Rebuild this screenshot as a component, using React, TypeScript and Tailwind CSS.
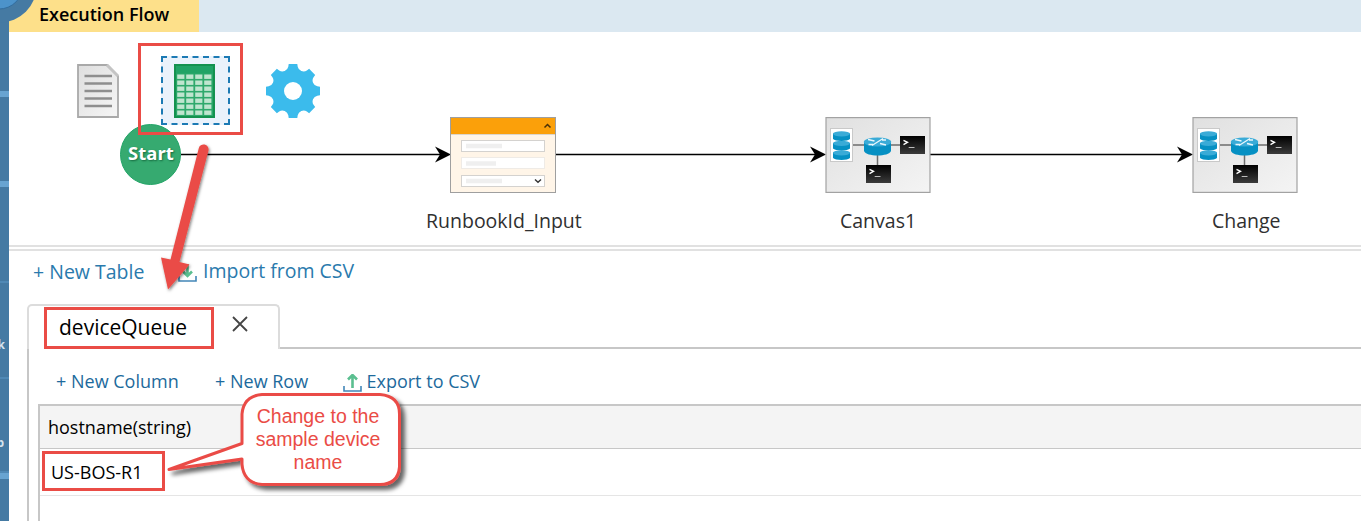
import React from 'react';

const point = (r: number, deg: number) => {
  const a = (deg * Math.PI) / 180;
  return `${(27 + r * Math.cos(a)).toFixed(2)} ${(27 + r * Math.sin(a)).toFixed(2)}`;
};

const gearPath =
  [0, 45, 90, 135, 180, 225, 270, 315]
    .map((a, i) => `${i ? 'L' : 'M'}${point(27.4, a - 9)}L${point(27.4, a + 9)}L${point(24.8, a + 11)}A6 6 0 0 0 ${point(24.8, a + 34)}`)
    .join('') + 'Z';

function Gear() {
  return (
    <svg width="54" height="54" viewBox="0 0 54 54">
      <path d={gearPath} fill="#3bbbec" />
      <circle cx="27" cy="27" r="9" fill="#fff" />
    </svg>
  );
}

function DocIcon() {
  return (
    <svg width="42" height="54" viewBox="0 0 42 54">
      <defs>
        <linearGradient id="paper" x1="0" y1="0" x2="1" y2="1">
          <stop offset="0" stopColor="#dedede" />
          <stop offset="1" stopColor="#f6f6f6" />
        </linearGradient>
      </defs>
      <path d="M1 1H30L41 12V53H1Z" fill="url(#paper)" stroke="#a9a9a9" strokeWidth="1.8" />
      <path d="M30 1L41 12" stroke="#c4c4c4" strokeWidth="3" />
      <path d="M7.5 12H35M7.5 19.5H35M7.5 27H35M7.5 34.5H35M7.5 42H35" stroke="#8e8e8e" strokeWidth="2.7" />
    </svg>
  );
}

function SheetIcon() {
  return (
    <svg width="41" height="54" viewBox="0 0 41 54">
      <rect x="1" y="1" width="39" height="52" fill="#21a366" stroke="#14924f" strokeWidth="2" />
      <rect x="2.5" y="9.5" width="36" height="42.5" fill="#2fa96c" />
      {[10.5, 16.5, 22.5, 28.5, 34.5, 40.5, 46.5].map((y) =>
        [3.2, 12.2, 21.2, 30.2].map((x) => <rect key={`${x}-${y}`} x={x} y={y} width="7.2" height="4.4" fill="#bfe5cf" />),
      )}
    </svg>
  );
}

function FormNode() {
  return (
    <svg width="106" height="76" viewBox="0 0 106 76">
      <rect x=".5" y=".5" width="105" height="75" fill="#fff5e8" stroke="#9f9f9f" />
      <rect x="1" y="1" width="104" height="16" fill="#fba00a" />
      <path d="M1 17.5H105" stroke="#ddd5ca" />
      <path d="M94.5 10.500L97.500 7.500L100.500 10.500" fill="none" stroke="#4b3207" strokeWidth="1.5" />
      <rect x="11.5" y="23.5" width="83" height="11" fill="#fff" stroke="#d4d2cf" />
      <rect x="11.5" y="40.5" width="83" height="11" fill="#fff" stroke="#efebe6" />
      <rect x="11.5" y="58.5" width="83" height="11" fill="#fff" stroke="#d4d2cf" />
      <path d="M16 29H52M16 46.5H46M16 64H52" stroke="#efefef" strokeWidth="4.5" />
      <path d="M85 62.5L88 65.3L91 62.5" fill="none" stroke="#333" strokeWidth="1.4" />
    </svg>
  );
}

function Terminal({ x, y }: { x: number; y: number }) {
  return (
    <g transform={`translate(${x} ${y})`}>
      <rect width="25" height="18" fill="url(#term)" />
      <path d="M3.5 4.3L7.5 6.3L3.5 8.7" fill="none" stroke="#fff" strokeWidth="1.4" />
      <path d="M8.7 11.5H14.5" stroke="#bbb" strokeWidth="1" />
    </g>
  );
}

function CanvasNode() {
  return (
    <svg width="106" height="76" viewBox="0 0 106 76">
      <defs>
        <linearGradient id="panel" x1="0" y1="0" x2="1" y2="1">
          <stop offset="0" stopColor="#e0e0e0" />
          <stop offset="1" stopColor="#f4f4f4" />
        </linearGradient>
        <linearGradient id="term" x1="0" y1="0" x2="0" y2="1">
          <stop offset="0" stopColor="#000" />
          <stop offset="1" stopColor="#3b3b3b" />
        </linearGradient>
      </defs>
      <rect x="1" y=".6" width="104" height="74.8" fill="url(#panel)" stroke="#a2a2a2" strokeWidth="1.2" />
      <path d="M28 28H76M52.500 36V50" stroke="#6e6e6e" strokeWidth="1.5" />
      <rect x="5.5" y="11.5" width="22" height="33" fill="#fff" stroke="#c9c9c9" />
      {[33.5, 24, 14.5].map((y) => (
        <g key={y} transform={`translate(8 ${y})`}>
          <path d="M0 2V7.5C2 10 15 10 17 7.5V2Z" fill="#0690c3" />
          <ellipse cx="8.5" cy="2.3" rx="8.5" ry="2.6" fill="#3aabd7" />
        </g>
      ))}
      <path d="M39 25V34C41 40 64 40 66 34V25Z" fill="#0690c3" />
      <ellipse cx="52.500" cy="25" rx="13.700" ry="4.600" fill="#3aabd7" />
      <path d="M43 22.500L49.500 24M58 21.500L47 28.500M55 26.500L61 28M43.500 27.500H48M57 23H61" stroke="#e9f7fc" strokeWidth="1.3" />
      <Terminal x={75} y={19} />
      <Terminal x={41} y={48} />
    </svg>
  );
}

function TransferIcon({ up = false }: { up?: boolean }) {
  return (
    <svg width="19" height="18" viewBox="0 0 19 18">
      <path d="M1 12V17H18V12" fill="none" stroke="#4387b8" strokeWidth="1.6" />
      {up ? (
        <path d="M9.5 14V1.5M5 5.5L9.5 1L14 5.5" fill="none" stroke="#5bbf90" strokeWidth="2.6" />
      ) : (
        <path d="M9.5 0V12M5 7.5L9.5 12L14 7.5" fill="none" stroke="#5bbf90" strokeWidth="2.6" />
      )}
    </svg>
  );
}

function NodeLabel({ children, className }: { children: React.ReactNode; className: string }) {
  return <div className={`absolute top-[176px] text-[19.500px] leading-[26px] whitespace-nowrap text-[#303030] ${className}`}>{children}</div>;
}

function FlowCanvas() {
  return (
    <section className="relative h-[213px] bg-white">
      <svg className="absolute top-0 left-0" width="1352" height="213" viewBox="9 32 1352 213">
        <path d="M181 154.5H440M556 154.5H815M930 154.5H1182" stroke="#000" strokeWidth="1.5" />
        {[451, 826, 1193].map((x) => (
          <path key={x} d={`M${x} 154.5L${x - 16} 146.5L${x - 11} 154.5L${x - 16} 162.5Z`} />
        ))}
      </svg>
      <div className="absolute top-[32px] left-[68px]"><DocIcon /></div>
      <div className="absolute top-[24px] left-[152px] h-[69px] w-[69px] border-2 border-dashed border-[#1c7ab4] bg-[#eaf2fb]" />
      <div className="absolute top-[32px] left-[165px]"><SheetIcon /></div>
      <div className="absolute top-[32px] left-[257px]"><Gear /></div>
      <div className="absolute top-[92px] left-[111px] flex h-[61px] w-[61px] items-center justify-center rounded-full border border-[#22a467] bg-[#36aa70] pb-[4px] pl-px text-[18.500px] font-bold text-white [text-shadow:1px_1px_2px_#176b40]">
        Start
      </div>
      <div className="absolute top-[85px] left-[441px]"><FormNode /></div>
      <div className="absolute top-[85px] left-[816px]"><CanvasNode /></div>
      <div className="absolute top-[85px] left-[1183px]"><CanvasNode /></div>
      <NodeLabel className="left-[417px]">RunbookId_Input</NodeLabel>
      <NodeLabel className="left-[831px]">Canvas1</NodeLabel>
      <NodeLabel className="left-[1203px]">Change</NodeLabel>
    </section>
  );
}

function Sidebar() {
  return (
    <aside className="relative flex h-full w-[9px] shrink-0 flex-col overflow-hidden bg-[#457aa3] text-[12px] font-bold text-[#d5e3ee]">
      <div className="h-[97px] shrink-0 border-b-6 border-[#68a4d1]" />
      <div className="h-[90px] shrink-0 border-b-6 border-[#68a4d1]" />
      <div className="h-[96px] shrink-0 border-b-2 border-[#5089b5]" />
      <div className="flex h-[96px] shrink-0 items-center justify-end border-b-2 border-[#5089b5] pt-[29px] pr-[4px]">k</div>
      <div className="flex h-[94px] shrink-0 items-center justify-end border-b-2 border-[#5089b5] pt-[36px] pr-[5px]">p</div>
      <div className="h-[6px] shrink-0 bg-[#68a4d1]" />
    </aside>
  );
}

function Annotations() {
  return (
    <>
      <svg className="pointer-events-none absolute top-0 left-0" width="1361" height="521" viewBox="0 0 1361 521">
        <defs>
          <filter id="shadow" x="-20%" y="-20%" width="150%" height="150%">
            <feDropShadow dx="4" dy="4" stdDeviation="2.2" floodColor="#000" floodOpacity=".6" />
          </filter>
          <filter id="soft" x="-30%" y="-20%" width="170%" height="150%">
            <feDropShadow dx="1" dy="1.5" stdDeviation="1.5" floodColor="#000" floodOpacity=".5" />
          </filter>
        </defs>
        <circle cx="0" cy="-14" r="36.5" fill="#457aa3" />
        <circle cx="-1" cy="-15" r="24" fill="#4c93cb" stroke="#326d9e" />
        <g fill="none" stroke="#ea4c46" strokeWidth="3">
          <rect x="139.500" y="44.500" width="102" height="89" />
          <rect x="45.500" y="308.500" width="167" height="39" />
          <rect x="43.500" y="452.500" width="120" height="37" />
        </g>
        <path d="M198.700 148.500A5 5 0 0 1 208.500 150.500L179.500 262L189.500 264.500L168 289.500L161 257.500L170.500 259.500Z" fill="#ea4c46" filter="url(#soft)" />
        <path
          d="M262 394.500H380Q399.500 396 399.500 414V467Q398 484.500 380 484.500H262Q243.500 483 242 464V459L169 469.500L242 443.500V414Q243.500 396 262 394.500Z"
          fill="#fff"
          stroke="#ea4c46"
          strokeWidth="3"
          strokeLinejoin="round"
          filter="url(#shadow)"
        />
      </svg>
      <div className="absolute top-[405px] left-[243px] w-[150px] text-center font-['Liberation_Sans',sans-serif] text-[19.500px] leading-[23px] text-[#ea4c46]">
        Change to the<br />sample device<br />name
      </div>
    </>
  );
}

export default function App() {
  return (
    <div className="relative flex h-[521px] w-[1361px] overflow-hidden bg-white font-['Open_Sans',sans-serif]">
      <Sidebar />
      <main className="flex min-w-0 flex-1 flex-col">
        <header className="flex h-[32px] shrink-0 bg-[#dbe8f1]">
          <div className="w-[190px] bg-[#fde08a] pl-[30px] text-[18px] leading-[29px] font-semibold whitespace-nowrap text-black">Execution Flow</div>
        </header>
        <FlowCanvas />
        <div className="h-[6px] shrink-0 border-y-2 border-[#e1e1e1]" />
        <div className="flex h-[53px] shrink-0 items-start pt-[7px] pl-[24px] text-[19.500px] leading-[28px] whitespace-nowrap text-[#2a7aad]">
          <div className="w-[145px]">+ New Table</div>
          <div className="flex">
            <div className="w-[25px] pt-[6px]"><TransferIcon /></div>
            <div className="-mt-px">Import from CSV</div>
          </div>
        </div>
        <div className="flex h-[45px] shrink-0 pl-[18px]">
          <div className="flex w-[253px] rounded-t-[5px] border-2 border-b-0 border-[#dcdcdc] pl-[30px] text-[21px] leading-[42px] text-black">
            <span className="w-[173px]">deviceQueue</span>
            <svg className="mt-[10px]" width="16" height="16" viewBox="0 0 16 16"><path d="M1 1L15 15M15 1L1 15" stroke="#454545" strokeWidth="1.800" /></svg>
          </div>
          <div className="flex-1 border-b-2 border-[#c7c7c7]" />
        </div>
        <div className="ml-[18px] flex min-h-0 flex-1 flex-col border-l-2 border-[#c7c7c7]">
          <div className="flex h-[55px] shrink-0 pt-[19px] pl-[27px] text-[18px] leading-[26px] whitespace-nowrap text-[#1d6a9c]">
            <div className="w-[159px]">+ New Column</div>
            <div className="w-[128px]">+ New Row</div>
            <div className="w-[23.500px] pt-[6px]"><TransferIcon up /></div>
            <div>Export to CSV</div>
          </div>
          <div className="ml-[9px] flex-1 border-t-2 border-l-2 border-[#c7c7c7] text-[18px] text-black">
            <div className="h-[43px] border-b border-[#c7c7c7] bg-[#f4f4f4] pl-[8px] leading-[42px]">hostname(string)</div>
            <div className="h-[47px] border-b border-[#e5e5e5] pl-[11px] leading-[46px]">US-BOS-R1</div>
          </div>
        </div>
      </main>
      <Annotations />
    </div>
  );
}
